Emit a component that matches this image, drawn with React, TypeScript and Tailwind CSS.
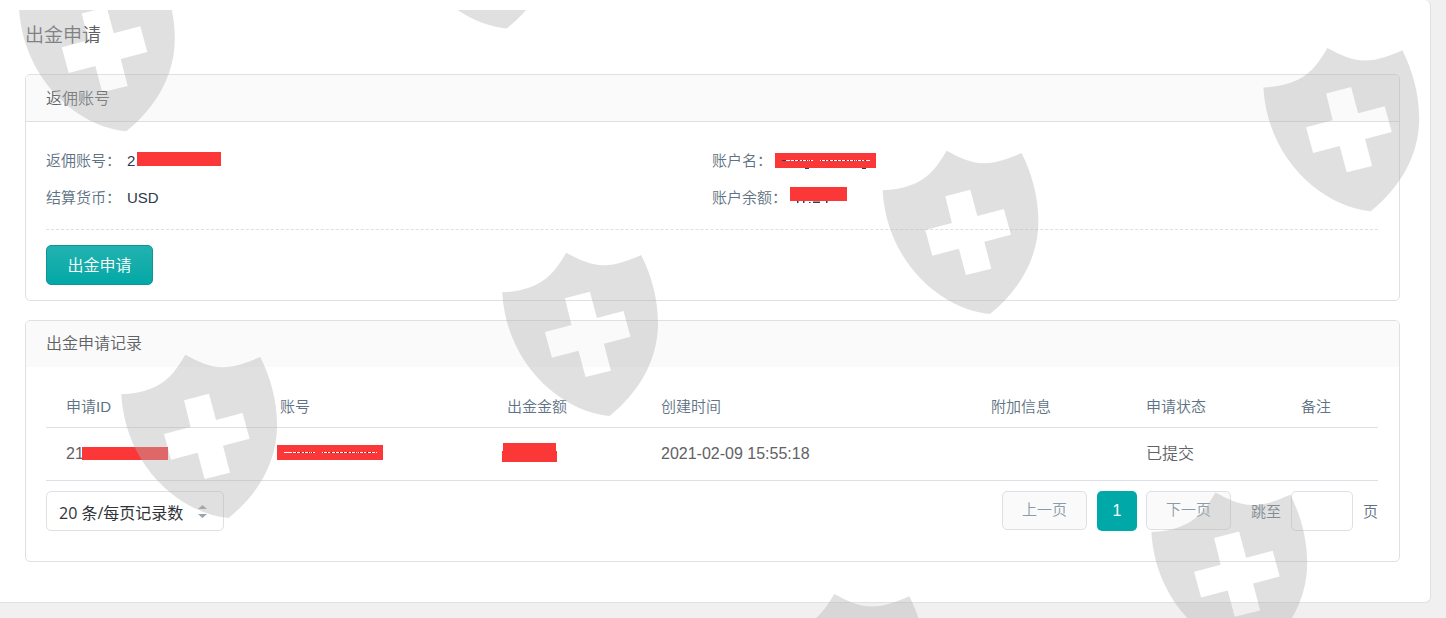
import type { ReactNode } from "react";

const columns = [
  { label: "申请ID", width: "w-[214px]" },
  { label: "账号", width: "w-[227px]" },
  { label: "出金金额", width: "w-[154px]" },
  { label: "创建时间", width: "w-[330px]" },
  { label: "附加信息", width: "w-[155px]" },
  { label: "申请状态", width: "w-[155px]" },
  { label: "备注", width: "w-[97px]" },
];

const shields = [
  [19, -42.7],
  [399.5, -145.5],
  [1263.4, 37.2],
  [882.6, 140],
  [502.2, 242],
  [121.3, 344],
  [1151.4, 481.8],
  [770.3, 583.3],
];

function Watermark() {
  return (
    <div className="pointer-events-none absolute inset-x-0 top-2.5 bottom-0 overflow-hidden" aria-hidden="true">
      <svg className="block h-full w-full" fill="#b1b1b1" fillOpacity="0.4" fillRule="evenodd">
        {shields.map(([x, y]) => (
          <path
            key={`${x},${y}`}
            transform={`translate(${x} ${y})`}
            d="M0 40.3C11 39.8 20 38 28 35.2C45 29 54 18 64 .7C76 7 88 13.3 101.5 13.3C115 13.3 127 8 139 3C149 23 155.7 46 155.8 71C155.8 108 137 140 107.3 164C60 160 4 113 0 40.3ZM62.7 46.3L87.7 39.7L94.7 66L121.3 59L128.3 84.7L101.7 91.7L108.7 118.7L83.3 125L76.3 98.7L49.7 105.7L42.7 80L69.3 73Z"
          />
        ))}
      </svg>
    </div>
  );
}

function NameMask({ width, tails }: { width: number; tails: boolean }) {
  return (
    <svg className="block" width={width} height="17" aria-hidden="true">
      <path fill="#fc3737" d={`M0 0H${width}V15H0Z`} />
      <path stroke="#fff" strokeWidth="1" fill="none" strokeDasharray="8 1" d={`M7 7.5H38M45 7.5H${width - 6}`} />
      <path stroke="#2c3e50" strokeWidth="1" fill="none" strokeDasharray="1 3" d={`M19 7.5H36M46 7.5H${width - 8}`} />
      {tails && <path stroke="#2c3e50" strokeWidth="1" d="M7 7.5H11M30 15.5H34M87 15.5H91" />}
    </svg>
  );
}

function Field({ label, children }: { label: string; children: ReactNode }) {
  return (
    <div className="flex h-[37px] items-center text-[15px]">
      <dt className="text-[#5e7283]">{label}：</dt>
      <dd className="flex items-center pl-1.5 text-[#2f3a45]">{children}</dd>
    </div>
  );
}

function PageButton({ children }: { children: ReactNode }) {
  return (
    <button
      type="button"
      className="h-[39px] w-[85px] rounded-[5px] border border-[#dfdfe6] bg-[#fafafa] text-[15px] text-[#8c9aa8]"
    >
      {children}
    </button>
  );
}

export default function App() {
  return (
    <div className="relative min-h-screen overflow-hidden bg-[#f0f0f0] pb-[15px] font-['Liberation_Sans','Noto_Sans_CJK_SC',sans-serif] font-[350] text-[#606266]">
      <main className="mr-[15px] rounded-r-md border-r border-b border-[#dfdfe6] bg-white pt-[19px] pr-[30px] pb-10 pl-[25px]">
        <h1 className="text-[19px] leading-[34px]">出金申请</h1>

        <section className="mt-[21px] rounded-[5px] border border-[#dfe0e6]">
          <h2 className="rounded-t border-b border-[#dfe0e2] bg-[#fafafa] px-5 pt-0.5 text-base leading-11">返佣账号</h2>
          <div className="pt-[21px] pr-[21px] pb-[15px] pl-5">
            <dl className="grid grid-cols-2">
              <Field label="返佣账号">
                <span>2</span>
                <svg className="mb-0.5 ml-0.5 block" width="84" height="17" aria-hidden="true">
                  <path fill="#fc3737" d="M0 0H84V14H0Z" />
                </svg>
              </Field>
              <Field label="账户名">
                <span className="-ml-[3px]">
                  <NameMask width={101} tails />
                </span>
              </Field>
              <Field label="结算货币">USD</Field>
              <Field label="账户余额">
                <svg className="mb-1.5 -ml-[3px] block" width="57" height="17" aria-hidden="true">
                  <path fill="#fc3737" d="M0 0H57V14H0Z" />
                  <path fill="#2c3e50" d="M7 14h1.5v2H7ZM13 14h1.500v2h-1.500ZM19 15h1.500v1h-1.500ZM23 14.500h7v1.500h-7ZM36 14h1.500v2h-1.500Z" />
                </svg>
              </Field>
            </dl>
            <hr className="mt-3 border-t border-dashed border-[#dcdfe3]" />
            <button
              type="button"
              className="mt-[15px] block h-10 w-[107px] rounded-[5px] border border-[#129592] bg-linear-to-b from-[#20b2b0] to-[#00a8a6] pt-0.5 text-base text-white"
            >
              出金申请
            </button>
          </div>
        </section>

        <section className="mt-[19px] rounded-[5px] border border-[#dfe0e6]">
          <h2 className="rounded-t bg-[#fafafa] px-5 text-base leading-[46px]">出金申请记录</h2>
          <div className="pt-5 pr-[21px] pb-7 pl-5">
            <table className="w-full table-fixed text-left">
              <thead className="text-[15px] text-[#5e7283]">
                <tr className="h-10 border-b border-[#dcdfe3]">
                  {columns.map((c) => (
                    <th key={c.label} scope="col" className={`${c.width} pl-5 font-[350]`}>
                      {c.label}
                    </th>
                  ))}
                </tr>
              </thead>
              <tbody className="text-base">
                <tr className="h-[53px] border-b border-[#dcdfe3]">
                  <td className="pl-5">
                    <span className="flex items-center">
                      21
                      <svg className="-ml-0.5 block" width="86" height="13" aria-hidden="true">
                        <path fill="#fc3737" d="M0 0H86V13H0Z" />
                      </svg>
                    </span>
                  </td>
                  <td className="pl-[17px]">
                    <NameMask width={106} tails={false} />
                  </td>
                  <td className="pl-[15px]">
                    <svg className="block" width="55" height="21" aria-hidden="true">
                      <path fill="#fc3737" d="M1 0H54V8H55V19H0V8H1Z" />
                    </svg>
                  </td>
                  <td className="pl-5">2021-02-09 15:55:18</td>
                  <td className="pl-5" />
                  <td className="pl-5">已提交</td>
                  <td className="pl-5" />
                </tr>
              </tbody>
            </table>

            <div className="flex items-start justify-between pt-2.5">
              <div className="relative">
                <select
                  aria-label="每页记录数"
                  className="h-10 w-[178px] appearance-none rounded-[5px] border border-[#dfdfe6] bg-white pt-1 pl-3 font-['Open_Sans','Noto_Sans_CJK_SC',sans-serif] text-base font-normal text-[#2f3338]"
                >
                  <option>20 条/每页记录数</option>
                </select>
                <svg
                  className="pointer-events-none absolute top-3.5 right-[17px]"
                  width="9"
                  height="13"
                  viewBox="0 0 9 13"
                  fill="#97a3b0"
                  aria-hidden="true"
                >
                  <path d="M4.500 0L9 4H0ZM0 9H9L4.500 13Z" />
                </svg>
              </div>

              <nav className="flex items-start text-[15px] text-[#5e7283]" aria-label="分页">
                <PageButton>上一页</PageButton>
                <button type="button" className="mr-[9px] ml-2.5 size-10 rounded-[5px] bg-[#00a9a7] text-base text-white">
                  1
                </button>
                <PageButton>下一页</PageButton>
                <label htmlFor="jump" className="pl-5 leading-[42px]">
                  跳至
                </label>
                <input id="jump" className="mx-2.5 h-10 w-[62px] rounded-[5px] border border-[#dfdfe6] bg-white px-2" />
                <span className="leading-[42px]">页</span>
              </nav>
            </div>
          </div>
        </section>
      </main>
      <Watermark />
    </div>
  );
}
